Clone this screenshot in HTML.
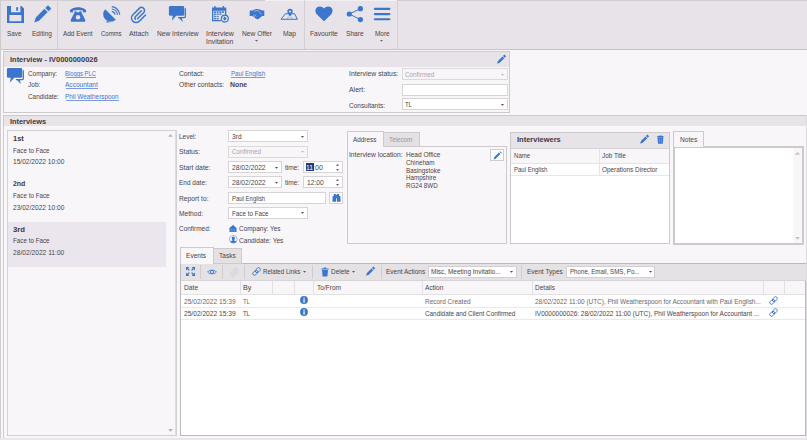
<!DOCTYPE html>
<html><head><meta charset="utf-8"><style>
html,body{margin:0;padding:0;width:807px;height:440px;overflow:hidden;background:#f9f6fa;}
.a{position:absolute;}
.t{position:absolute;white-space:nowrap;transform-origin:0 0;font-family:"Liberation Sans",sans-serif;font-size:7.3px;color:#4a4446;}
svg{overflow:visible;}
</style></head><body>
<div class="a" style="left:0px;top:0px;width:807px;height:440px;background:#f9f6fa;"></div>
<div class="a" style="left:0px;top:0px;width:807px;height:49px;background:#e7e3e8;"></div>
<div class="a" style="left:0px;top:49px;width:807px;height:1px;background:#c6c3c7;"></div>
<div class="a" style="left:265px;top:0px;width:132px;height:1px;background:#f3f0f4;"></div>
<div class="a" style="left:0px;top:0px;width:265px;height:1px;background:#d2cfd3;"></div>
<div class="a" style="left:397px;top:0px;width:410px;height:1px;background:#d2cfd3;"></div>
<div class="a" style="left:57px;top:0px;width:1px;height:49px;background:#d3d0d4;"></div>
<div class="a" style="left:304px;top:0px;width:1px;height:49px;background:#d3d0d4;"></div>
<div class="a" style="left:397px;top:0px;width:1px;height:49px;background:#d3d0d4;"></div>
<div class="a" style="left:0px;top:0px;width:1px;height:440px;background:#cfccd0;"></div>
<div class="t" style="top:29px;font-size:7.3px;line-height:10px;left:7.40px;transform:scaleX(0.8774);">Save</div>
<div class="t" style="top:29px;font-size:7.3px;line-height:10px;left:32.35px;transform:scaleX(0.8919);">Editing</div>
<div class="t" style="top:29px;font-size:7.3px;line-height:10px;left:62.60px;transform:scaleX(0.8791);">Add Event</div>
<div class="t" style="top:29px;font-size:7.3px;line-height:10px;left:100.60px;transform:scaleX(0.8194);">Comms</div>
<div class="t" style="top:29px;font-size:7.3px;line-height:10px;left:128.60px;transform:scaleX(0.9474);">Attach</div>
<div class="t" style="top:29px;font-size:7.3px;line-height:10px;left:156.60px;transform:scaleX(0.9077);">New Interview</div>
<div class="t" style="top:29px;font-size:7.3px;line-height:10px;left:205.75px;transform:scaleX(0.9554);">Interview</div>
<div class="t" style="top:29px;font-size:7.3px;line-height:10px;left:241.90px;transform:scaleX(0.9169);">New Offer</div>
<div class="t" style="top:29px;font-size:7.3px;line-height:10px;left:282.85px;transform:scaleX(0.9223);">Map</div>
<div class="t" style="top:29px;font-size:7.3px;line-height:10px;left:310.00px;transform:scaleX(0.9138);">Favourite</div>
<div class="t" style="top:29px;font-size:7.3px;line-height:10px;left:346.05px;transform:scaleX(0.9084);">Share</div>
<div class="t" style="top:29px;font-size:7.3px;line-height:10px;left:375.05px;transform:scaleX(0.8842);">More</div>
<div class="t" style="top:37px;font-size:7.3px;line-height:10px;left:206.00px;transform:scaleX(0.9378);">Invitation</div>
<svg class="a" style="left:255.0px;top:40.25px" width="3.0" height="1.65" viewBox="0 0 4 2.2" preserveAspectRatio="none"><path d="M0 0H4L2 2.2Z" fill="#6a6468"/></svg>
<svg class="a" style="left:380.3px;top:40.25px" width="3.0" height="1.65" viewBox="0 0 4 2.2" preserveAspectRatio="none"><path d="M0 0H4L2 2.2Z" fill="#6a6468"/></svg>
<svg class="a" style="left:7px;top:6px" width="17" height="17" viewBox="0 0 17 17"><path fill="#3c76cc" d="M0 0H14.5L17 2.5V17H0Z M4 0V6.3H13.4V0Z M2.4 8.9V15.2H14.4V8.9Z" fill-rule="evenodd"/><rect x="9.2" y="1.2" width="1.9" height="3.5" fill="#3c76cc"/></svg>
<svg class="a" style="left:34px;top:6px" width="17" height="17" viewBox="0 0 17 17"><path fill="#3c76cc" d="M0.3 16.4L1.8 11.4L10.4 2.8L13.7 6.1L5.1 14.7Z M11.3 1.9L14 -0.8L17.3 2.5L14.6 5.2Z"/></svg>
<svg class="a" style="left:69px;top:7px" width="19" height="16" viewBox="0 0 19 16"><path fill="#3c76cc" d="M1 5.2C0.5 4 1 2.6 2.2 1.9C6.5 -0.4 11.5 -0.4 15.8 1.9C17 2.6 17.5 4 17 5.2L14.3 5.6L13.8 3.6C10.8 2.7 7.2 2.7 4.2 3.6L3.7 5.6Z"/><path fill="#3c76cc" d="M5.6 4.3H7.6V5.3H10.4V4.3H12.4V5.3L16.2 12.8V14.7H1.8V12.8L5.6 5.3Z"/><circle cx="9" cy="10.2" r="2.2" fill="#e7e3e8"/></svg>
<svg class="a" style="left:102px;top:5px" width="19" height="18" viewBox="0 0 19 18"><path fill="#3c76cc" d="M3.2 4.2A7.5 7.5 0 0 0 13.8 14.8Z"/><path fill="#3c76cc" d="M5 15.5L4.2 17.6L8.2 17.2Z"/><path fill="none" stroke="#3c76cc" stroke-width="1.2" d="M9.8 6.4A4.2 4.2 0 0 1 13.1 9.7 M9.8 4A6.5 6.5 0 0 1 15.5 9.7 M9.8 1.7A8.8 8.8 0 0 1 17.8 9.7"/></svg>
<svg class="a" style="left:131px;top:6px" width="16" height="17" viewBox="0 0 16 17"><path fill="none" stroke="#3c76cc" stroke-width="1.5" stroke-linecap="round" d="M6.5 12.8L12.6 6.7C13.8 5.5 13.8 3.6 12.6 2.4C11.4 1.2 9.5 1.2 8.3 2.4L1.9 8.8C0.1 10.6 0.1 13.4 1.9 15.2C3.7 17 6.5 17 8.3 15.2L14.5 9"/><path fill="none" stroke="#3c76cc" stroke-width="1.5" stroke-linecap="round" d="M10.3 4.8L4.3 10.8C3.6 11.5 3.6 12.4 4.3 13.1"/></svg>
<svg class="a" style="left:168px;top:5px" width="19" height="18" viewBox="0 0 19 18"><path fill="none" stroke="#3c76cc" stroke-width="1.3" d="M17.3 3.3V11.4Q17.3 12.7 16 12.7H10"/><path fill="#3c76cc" d="M2.2 1H14.9Q16.2 1 16.2 2.3V9.4Q16.2 10.7 14.9 10.7H8.2L3.8 15.8L4.8 10.7H2.2Q0.9 10.7 0.9 9.4V2.3Q0.9 1 2.2 1Z"/><path fill="#3c76cc" d="M10.6 12.2H13.8L14.7 17.2Z"/></svg>
<svg class="a" style="left:211px;top:6px" width="19" height="17" viewBox="0 0 19 17"><path fill="#3c76cc" d="M1 1.5H15.3V9.7A4.6 4.6 0 0 0 10.2 15.2H1Z M2.3 4.7V13.9H9.9A4.6 4.6 0 0 1 14 9.9V4.7Z" fill-rule="evenodd"/><rect x="3.2" y="0" width="1.4" height="2.8" fill="#3c76cc"/><rect x="11.7" y="0" width="1.4" height="2.8" fill="#3c76cc"/><path fill="#3c76cc" opacity="0.85" d="M2.9 5.3H5.0V6.9H2.9Z M2.9 7.5H5.0V9.1H2.9Z M2.9 9.7H5.0V11.3H2.9Z M2.9 11.9H5.0V13.5H2.9Z M5.6 5.3H7.7V6.9H5.6Z M5.6 7.5H7.7V9.1H5.6Z M5.6 9.7H7.7V11.3H5.6Z M5.6 11.9H7.7V13.5H5.6Z M8.3 5.3H10.4V6.9H8.3Z M8.3 7.5H10.4V9.1H8.3Z M11.0 5.3H13.1V6.9H11.0Z"/><circle cx="13.8" cy="12.6" r="3.5" fill="none" stroke="#3c76cc" stroke-width="1.2"/><path fill="#3c76cc" d="M13.8 10.6L15.7 12.5L13.8 14.7L11.9 12.5Z"/></svg>
<svg class="a" style="left:249px;top:8px" width="16" height="12" viewBox="0 0 16 12"><path fill="#3c76cc" d="M0.7 2.4H3.1V8.1H0.7Z M12.9 2.4H15.3V8.1H12.9Z M2.8 2.9Q5.5 1 8 1.1Q11 1.2 13.2 2.6V8L9.5 10.9Q8 11.6 6.8 10.6L2.8 7.6Z"/><path fill="none" stroke="#e7e3e8" stroke-width="0.55" d="M5.2 3.6Q7.5 2.2 9 2.4L12.4 6.4 M4.2 7.3L5.9 9 M5.3 6.4L7.3 8.4"/></svg>
<svg class="a" style="left:280px;top:8px" width="18" height="13" viewBox="0 0 18 13"><path fill="none" stroke="#3c76cc" stroke-width="1" stroke-linejoin="round" d="M8 5.8H5.3L1 11.3H17.4L14.6 5.8H12"/><path fill="none" stroke="#3c76cc" stroke-width="0.5" d="M6.5 11L9 8.8 M10.8 8.8L12.5 11"/><path fill="#3c76cc" d="M10 0.8A2.7 2.7 0 0 1 12.7 3.5C12.7 5.3 10 8.6 10 8.6S7.3 5.3 7.3 3.5A2.7 2.7 0 0 1 10 0.8Z"/><circle cx="10" cy="3.5" r="1.1" fill="#e7e3e8"/></svg>
<svg class="a" style="left:315px;top:6px" width="18" height="16" viewBox="0 0 18 16"><path fill="#3c76cc" d="M9 15.3L2 8.4C-0.2 6.2 0 2.8 2.1 1.3C4.3 -0.3 7.3 0.3 9 2.6C10.7 0.3 13.7 -0.3 15.9 1.3C18 2.8 18.2 6.2 16 8.4Z"/></svg>
<svg class="a" style="left:346px;top:5px" width="18" height="18" viewBox="0 0 18 18"><path stroke="#3c76cc" stroke-width="1" d="M3.3 9L14.4 3.7 M3.3 9L14.4 14.6"/><circle cx="3.3" cy="9" r="2.6" fill="#3c76cc"/><circle cx="14.4" cy="3.7" r="2.6" fill="#3c76cc"/><circle cx="14.4" cy="14.6" r="2.6" fill="#3c76cc"/></svg>
<svg class="a" style="left:373px;top:6px" width="19" height="16" viewBox="0 0 19 16"><path stroke="#3c76cc" stroke-width="2.1" stroke-linecap="round" d="M1.9 2.9H16.4 M1.9 8.1H16.4 M1.9 13.3H16.4"/></svg>
<div class="a" style="left:3px;top:51px;width:507px;height:62px;background:#f9f6fa;border:1px solid #cdcace;box-sizing:border-box;"></div>
<div class="a" style="left:4px;top:52px;width:505px;height:15px;background:#e7e3e8;"></div>
<div class="t" style="top:55px;font-size:7.3px;line-height:10px;font-weight:700;color:#3f393c;left:9.60px;transform:scaleX(1.0234);">Interview - IV0000000026</div>
<svg class="a" style="left:496.5px;top:54.6px" width="9" height="9" viewBox="0 0 17 17"><path fill="#3c76cc" d="M0.3 16.4L1.8 11.4L10.4 2.8L13.7 6.1L5.1 14.7Z M11.3 1.9L14 -0.8L17.3 2.5L14.6 5.2Z"/></svg>
<svg class="a" style="left:6px;top:67px" width="19" height="19" viewBox="0 0 19 19"><path fill="none" stroke="#3c76cc" stroke-width="1.3" d="M17.3 3.3V11.4Q17.3 12.7 16 12.7H10"/><path fill="#3c76cc" d="M2.2 1H14.9Q16.2 1 16.2 2.3V9.4Q16.2 10.7 14.9 10.7H8.2L3.8 15.8L4.8 10.7H2.2Q0.9 10.7 0.9 9.4V2.3Q0.9 1 2.2 1Z"/><path fill="#3c76cc" d="M10.6 12.2H13.8L14.7 17.2Z"/></svg>
<div class="t" style="top:69px;font-size:7.3px;line-height:10px;left:27.60px;transform:scaleX(0.8748);">Company:</div>
<div class="t" style="top:80px;font-size:7.3px;line-height:10px;left:27.60px;transform:scaleX(0.9000);">Job:</div>
<div class="t" style="top:92px;font-size:7.3px;line-height:10px;left:27.60px;transform:scaleX(0.8754);">Candidate:</div>
<div class="t" style="top:69px;font-size:7.3px;line-height:10px;color:#4474d0;left:65.00px;transform:scaleX(0.8042);">Bloggs PLC</div>
<div class="a" style="left:66px;top:77px;width:30px;height:1px;background:#7b9bdc;"></div>
<div class="t" style="top:80px;font-size:7.3px;line-height:10px;color:#4474d0;left:65.00px;transform:scaleX(0.8982);">Accountant</div>
<div class="a" style="left:66px;top:88px;width:32px;height:1px;background:#7b9bdc;"></div>
<div class="t" style="top:92px;font-size:7.3px;line-height:10px;color:#4474d0;left:65.00px;transform:scaleX(0.8711);">Phil Weatherspoon</div>
<div class="a" style="left:66px;top:100px;width:53px;height:1px;background:#7b9bdc;"></div>
<div class="t" style="top:69px;font-size:7.3px;line-height:10px;left:179.30px;transform:scaleX(0.9232);">Contact:</div>
<div class="t" style="top:80px;font-size:7.3px;line-height:10px;left:179.30px;transform:scaleX(0.9114);">Other contacts:</div>
<div class="t" style="top:69px;font-size:7.3px;line-height:10px;color:#4474d0;left:230.60px;transform:scaleX(0.8404);">Paul English</div>
<div class="a" style="left:231px;top:77px;width:34px;height:1px;background:#7b9bdc;"></div>
<div class="t" style="top:80px;font-size:7.3px;line-height:10px;font-weight:700;left:229.60px;transform:scaleX(0.9425);">None</div>
<div class="t" style="top:69px;font-size:7.3px;line-height:10px;left:349.00px;transform:scaleX(0.9330);">Interview status:</div>
<div class="t" style="top:85px;font-size:7.3px;line-height:10px;left:349.00px;transform:scaleX(0.9453);">Alert:</div>
<div class="t" style="top:101px;font-size:7.3px;line-height:10px;left:349.00px;transform:scaleX(0.8875);">Consultants:</div>
<div class="a" style="left:402px;top:68px;width:106px;height:12px;background:#f9f6fa;border:1px solid #dcd9dd;box-sizing:border-box;"></div>
<div class="t" style="top:70px;font-size:7.3px;line-height:10px;color:#aaa5aa;left:405.30px;transform:scaleX(0.8672);">Confirmed</div>
<svg class="a" style="left:500.5px;top:73.75px" width="3.0" height="1.65" viewBox="0 0 4 2.2" preserveAspectRatio="none"><path d="M0 0H4L2 2.2Z" fill="#bcb8bc"/></svg>
<div class="a" style="left:402px;top:84px;width:106px;height:12px;background:#ffffff;border:1px solid #d7d4d8;box-sizing:border-box;"></div>
<div class="a" style="left:402px;top:98px;width:106px;height:12px;background:#ffffff;border:1px solid #d7d4d8;box-sizing:border-box;"></div>
<div class="t" style="top:100px;font-size:7.3px;line-height:10px;left:405.30px;transform:scaleX(0.8103);">TL</div>
<svg class="a" style="left:500.5px;top:103.75px" width="3.0" height="1.65" viewBox="0 0 4 2.2" preserveAspectRatio="none"><path d="M0 0H4L2 2.2Z" fill="#4b4447"/></svg>
<div class="a" style="left:3px;top:115px;width:804px;height:324px;background:#f9f6fa;border:1px solid #cdcace;box-sizing:border-box;border-right-color:#dedbdf;border-bottom-color:#e3e0e4;"></div>
<div class="a" style="left:0px;top:438px;width:807px;height:2px;background:#eae7eb;"></div>
<div class="a" style="left:4px;top:116px;width:802px;height:10px;background:#e7e3e8;"></div>
<div class="t" style="top:117px;font-size:7.3px;line-height:10px;font-weight:700;color:#3f393c;left:9.80px;transform:scaleX(1.0111);">Interviews</div>
<div class="a" style="left:7px;top:130px;width:170px;height:306px;background:#f9f6fa;border:1px solid #d3d0d4;box-sizing:border-box;"></div>
<div class="a" style="left:175px;top:131px;width:1px;height:304px;background:#e0dde1;"></div>
<div class="a" style="left:8px;top:222px;width:158px;height:45px;background:#ebe6ed;"></div>
<svg class="a" style="left:168.0px;top:134.35px" width="5.0" height="2.75" viewBox="0 0 4 2.2" preserveAspectRatio="none"><path d="M0 2.2H4L2 0Z" fill="#bab6ba"/></svg>
<svg class="a" style="left:168.1px;top:428.75px" width="5.0" height="2.75" viewBox="0 0 4 2.2" preserveAspectRatio="none"><path d="M0 0H4L2 2.2Z" fill="#bab6ba"/></svg>
<div class="t" style="top:134px;font-size:7.3px;line-height:10px;font-weight:700;color:#3f393c;left:12.90px;transform:scaleX(1.0240);">1st</div>
<div class="t" style="top:146px;font-size:7.3px;line-height:10px;left:12.90px;transform:scaleX(0.8593);">Face to Face</div>
<div class="t" style="top:157px;font-size:7.3px;line-height:10px;left:12.90px;transform:scaleX(0.9030);">15/02/2022 10:00</div>
<div class="t" style="top:179px;font-size:7.3px;line-height:10px;font-weight:700;color:#3f393c;left:12.90px;transform:scaleX(0.9473);">2nd</div>
<div class="t" style="top:191px;font-size:7.3px;line-height:10px;left:12.90px;transform:scaleX(0.8593);">Face to Face</div>
<div class="t" style="top:203px;font-size:7.3px;line-height:10px;left:12.90px;transform:scaleX(0.9030);">23/02/2022 10:00</div>
<div class="t" style="top:225px;font-size:7.3px;line-height:10px;font-weight:700;color:#3f393c;left:12.90px;transform:scaleX(1.0652);">3rd</div>
<div class="t" style="top:236px;font-size:7.3px;line-height:10px;left:12.90px;transform:scaleX(0.8593);">Face to Face</div>
<div class="t" style="top:248px;font-size:7.3px;line-height:10px;left:12.90px;transform:scaleX(0.9115);">28/02/2022 11:00</div>
<div class="t" style="top:132px;font-size:7.3px;line-height:10px;left:179.30px;transform:scaleX(0.8879);">Level:</div>
<div class="t" style="top:147px;font-size:7.3px;line-height:10px;left:179.30px;transform:scaleX(0.9287);">Status:</div>
<div class="t" style="top:163px;font-size:7.3px;line-height:10px;left:179.30px;transform:scaleX(0.9355);">Start date:</div>
<div class="t" style="top:178px;font-size:7.3px;line-height:10px;left:179.30px;transform:scaleX(0.8896);">End date:</div>
<div class="t" style="top:194px;font-size:7.3px;line-height:10px;left:179.30px;transform:scaleX(0.9205);">Report to:</div>
<div class="t" style="top:209px;font-size:7.3px;line-height:10px;left:179.30px;transform:scaleX(0.9137);">Method:</div>
<div class="t" style="top:224px;font-size:7.3px;line-height:10px;left:179.30px;transform:scaleX(0.8827);">Confirmed:</div>
<div class="a" style="left:228px;top:130px;width:80px;height:12px;background:#ffffff;border:1px solid #d7d4d8;box-sizing:border-box;"></div>
<div class="t" style="top:132px;font-size:7.3px;line-height:10px;left:231.60px;transform:scaleX(0.9102);">3rd</div>
<svg class="a" style="left:301.0px;top:135.75px" width="3.0" height="1.65" viewBox="0 0 4 2.2" preserveAspectRatio="none"><path d="M0 0H4L2 2.2Z" fill="#4b4447"/></svg>
<div class="a" style="left:228px;top:146px;width:80px;height:12px;background:#f9f6fa;border:1px solid #dcd9dd;box-sizing:border-box;"></div>
<div class="t" style="top:147px;font-size:7.3px;line-height:10px;color:#aaa5aa;left:231.60px;transform:scaleX(0.8583);">Confirmed</div>
<svg class="a" style="left:301.0px;top:151.25px" width="3.0" height="1.65" viewBox="0 0 4 2.2" preserveAspectRatio="none"><path d="M0 0H4L2 2.2Z" fill="#bcb8bc"/></svg>
<div class="a" style="left:228px;top:161px;width:54px;height:12px;background:#ffffff;border:1px solid #d7d4d8;box-sizing:border-box;"></div>
<div class="t" style="top:163px;font-size:7.3px;line-height:10px;left:231.60px;transform:scaleX(0.9198);">28/02/2022</div>
<svg class="a" style="left:275.0px;top:166.85px" width="3.0" height="1.65" viewBox="0 0 4 2.2" preserveAspectRatio="none"><path d="M0 0H4L2 2.2Z" fill="#4b4447"/></svg>
<div class="t" style="top:163px;font-size:7.3px;line-height:10px;left:284.60px;transform:scaleX(0.9043);">time:</div>
<div class="a" style="left:303px;top:161px;width:40px;height:12px;background:#ffffff;border:1px solid #d7d4d8;box-sizing:border-box;"></div>
<div class="a" style="left:306px;top:163px;width:8px;height:8px;background:#1d3b7c;"></div>
<div class="t" style="top:163px;font-size:7.3px;line-height:10px;color:#ffffff;left:306.10px;transform:scaleX(0.9369);">11</div>
<div class="t" style="top:163px;font-size:7.3px;line-height:10px;left:313.10px;transform:scaleX(0.9748);">:00</div>
<svg class="a" style="left:336.3px;top:164.05px" width="3.0" height="1.65" viewBox="0 0 4 2.2" preserveAspectRatio="none"><path d="M0 2.2H4L2 0Z" fill="#5a5458"/></svg>
<svg class="a" style="left:336.3px;top:169.05px" width="3.0" height="1.65" viewBox="0 0 4 2.2" preserveAspectRatio="none"><path d="M0 0H4L2 2.2Z" fill="#5a5458"/></svg>
<div class="a" style="left:228px;top:176px;width:54px;height:12px;background:#ffffff;border:1px solid #d7d4d8;box-sizing:border-box;"></div>
<div class="t" style="top:178px;font-size:7.3px;line-height:10px;left:231.60px;transform:scaleX(0.9198);">28/02/2022</div>
<svg class="a" style="left:275.0px;top:181.95px" width="3.0" height="1.65" viewBox="0 0 4 2.2" preserveAspectRatio="none"><path d="M0 0H4L2 2.2Z" fill="#4b4447"/></svg>
<div class="t" style="top:178px;font-size:7.3px;line-height:10px;left:284.60px;transform:scaleX(0.9043);">time:</div>
<div class="a" style="left:303px;top:176px;width:40px;height:12px;background:#ffffff;border:1px solid #d7d4d8;box-sizing:border-box;"></div>
<div class="t" style="top:178px;font-size:7.3px;line-height:10px;left:306.80px;transform:scaleX(0.9198);">12:00</div>
<svg class="a" style="left:336.3px;top:179.25px" width="3.0" height="1.65" viewBox="0 0 4 2.2" preserveAspectRatio="none"><path d="M0 2.2H4L2 0Z" fill="#5a5458"/></svg>
<svg class="a" style="left:336.3px;top:184.25px" width="3.0" height="1.65" viewBox="0 0 4 2.2" preserveAspectRatio="none"><path d="M0 0H4L2 2.2Z" fill="#5a5458"/></svg>
<div class="a" style="left:228px;top:192px;width:98px;height:12px;background:#ffffff;border:1px solid #d7d4d8;box-sizing:border-box;"></div>
<div class="t" style="top:194px;font-size:7.3px;line-height:10px;left:231.60px;transform:scaleX(0.8182);">Paul English</div>
<div class="a" style="left:329px;top:192px;width:14px;height:12px;background:#ffffff;border:1px solid #d7d4d8;box-sizing:border-box;"></div>
<svg class="a" style="left:331.6px;top:194.3px" width="9" height="8" viewBox="0 0 9 8"><path fill="#3c76cc" d="M1.8 0H3.9V2.2H1.8Z M5.1 0H7.2V2.2H5.1Z M0.6 2H4.1V7.3Q4.1 7.8 3.6 7.8H0.9Q0.4 7.8 0.4 7.3Z M4.9 2H8.4L8.6 7.3Q8.6 7.8 8.1 7.8H5.4Q4.9 7.8 4.9 7.3Z M3.8 0.8H5.2V4.2H3.8Z"/></svg>
<div class="a" style="left:228px;top:207px;width:80px;height:12px;background:#ffffff;border:1px solid #d7d4d8;box-sizing:border-box;"></div>
<div class="t" style="top:209px;font-size:7.3px;line-height:10px;left:231.60px;transform:scaleX(0.8593);">Face to Face</div>
<svg class="a" style="left:301.0px;top:212.25px" width="3.0" height="1.65" viewBox="0 0 4 2.2" preserveAspectRatio="none"><path d="M0 0H4L2 2.2Z" fill="#4b4447"/></svg>
<svg class="a" style="left:229.3px;top:224.6px" width="8" height="8" viewBox="0 0 8 8"><path fill="#3c76cc" d="M4 0.1L7.9 3.3H0.1Z M0.5 3.3H7.5V7.1H0.5Z"/><path stroke="#8db0ea" stroke-width="0.5" d="M2.4 3.8V6.8 M4 3.8V6.8 M5.6 3.8V6.8"/></svg>
<div class="t" style="top:224px;font-size:7.3px;line-height:10px;left:238.60px;transform:scaleX(0.8839);">Company: Yes</div>
<svg class="a" style="left:229.2px;top:235.4px" width="9" height="9" viewBox="0 0 9 9"><circle cx="4.3" cy="4.3" r="3.9" fill="#ffffff" stroke="#7fa3e4" stroke-width="0.8"/><path fill="#3c76cc" d="M4.3 1.4A1.6 1.8 0 0 1 5.9 3.2C5.9 4.2 5.4 4.9 4.9 5.2L7.4 6.4A3.9 3.9 0 0 1 1.2 6.4L3.7 5.2C3.2 4.9 2.7 4.2 2.7 3.2A1.6 1.8 0 0 1 4.3 1.4Z"/></svg>
<div class="t" style="top:236px;font-size:7.3px;line-height:10px;left:238.60px;transform:scaleX(0.9044);">Candidate: Yes</div>
<div class="a" style="left:347px;top:146px;width:160px;height:98px;background:#f9f6fa;border:1px solid #cdcace;box-sizing:border-box;"></div>
<div class="a" style="left:383px;top:132px;width:37px;height:15px;background:#e4e1e5;border:1px solid #cdcace;box-sizing:border-box;"></div>
<div class="a" style="left:347px;top:131px;width:37px;height:16px;background:#f9f6fa;border:1px solid #cdcace;box-sizing:border-box;border-bottom:none;"></div>
<div class="t" style="top:135px;font-size:7.3px;line-height:10px;left:353.20px;transform:scaleX(0.8737);">Address</div>
<div class="t" style="top:135px;font-size:7.3px;line-height:10px;color:#9b979b;left:389.30px;transform:scaleX(0.8575);">Telecom</div>
<div class="t" style="top:150px;font-size:6.4px;line-height:10px;left:349.00px;transform:scaleX(1.0478);">Interview location:</div>
<div class="t" style="top:150px;font-size:6.4px;line-height:10px;left:405.60px;transform:scaleX(1.0226);">Head Office</div>
<div class="t" style="top:158px;font-size:6.4px;line-height:10px;left:405.60px;transform:scaleX(0.9814);">Chineham</div>
<div class="t" style="top:166px;font-size:6.4px;line-height:10px;left:405.60px;transform:scaleX(0.9877);">Basingstoke</div>
<div class="t" style="top:173px;font-size:6.4px;line-height:10px;left:405.60px;transform:scaleX(0.9739);">Hampshire</div>
<div class="t" style="top:181px;font-size:6.4px;line-height:10px;left:405.60px;transform:scaleX(0.9672);">RG24 8WD</div>
<div class="a" style="left:490px;top:149px;width:14px;height:12px;background:#ffffff;border:1px solid #d0cdd1;box-sizing:border-box;"></div>
<svg class="a" style="left:492.5px;top:151px" width="9" height="9" viewBox="0 0 9 9"><path fill="#3c76cc" d="M0.6 8.4L1.2 6.3L5.9 1.6L7.4 3.1L2.7 7.8Z M6.6 0.9L7.3 0.2L8.8 1.7L8.1 2.4Z"/></svg>
<div class="a" style="left:510px;top:132px;width:160px;height:112px;background:#ffffff;border:1px solid #cdcace;box-sizing:border-box;"></div>
<div class="a" style="left:511px;top:133px;width:158px;height:16px;background:#e7e3e8;"></div>
<div class="t" style="top:135px;font-size:7.3px;line-height:10px;font-weight:700;color:#3f393c;left:516.60px;transform:scaleX(1.0283);">Interviewers</div>
<svg class="a" style="left:639.8px;top:135.4px" width="9" height="9" viewBox="0 0 17 17"><path fill="#3c76cc" d="M0.3 16.4L1.8 11.4L10.4 2.8L13.7 6.1L5.1 14.7Z M11.3 1.9L14 -0.8L17.3 2.5L14.6 5.2Z"/></svg>
<svg class="a" style="left:657.4px;top:135.4px" width="7" height="9" viewBox="0 0 7 9"><path fill="#3c76cc" d="M0 2.2Q0 0.5 3.4 0.5Q6.8 0.5 6.8 2.2Z M0.5 2.6H6.3L5.8 8.7H1Z"/><path stroke="#8fb0e6" stroke-width="0.5" d="M2.5 3.6V7.6 M4.3 3.6V7.6"/></svg>
<div class="a" style="left:511px;top:149px;width:158px;height:14px;background:#f9f6fa;"></div>
<div class="a" style="left:511px;top:148px;width:158px;height:1px;background:#d6d3d7;"></div>
<div class="a" style="left:511px;top:163px;width:158px;height:1px;background:#e6e3e7;"></div>
<div class="a" style="left:599px;top:149px;width:1px;height:27px;background:#e6e3e7;"></div>
<div class="t" style="top:151px;font-size:7.3px;line-height:10px;left:513.80px;transform:scaleX(0.8321);">Name</div>
<div class="t" style="top:151px;font-size:7.3px;line-height:10px;left:602.40px;transform:scaleX(0.8717);">Job Title</div>
<div class="t" style="top:165px;font-size:7.3px;line-height:10px;left:513.80px;transform:scaleX(0.8206);">Paul English</div>
<div class="t" style="top:165px;font-size:7.3px;line-height:10px;left:602.40px;transform:scaleX(0.8773);">Operations Director</div>
<div class="a" style="left:511px;top:175px;width:158px;height:1px;background:#e9e6ea;"></div>
<div class="a" style="left:673px;top:146px;width:131px;height:99px;background:#cdcace;"></div>
<div class="a" style="left:675px;top:148px;width:127px;height:95px;background:#f9f6fa;"></div>
<div class="a" style="left:675px;top:148px;width:118px;height:95px;background:#ffffff;"></div>
<div class="a" style="left:673px;top:131px;width:31px;height:16px;background:#f9f6fa;border:1px solid #cdcace;box-sizing:border-box;border-bottom:none;"></div>
<div class="t" style="top:135px;font-size:7.3px;line-height:10px;left:679.60px;transform:scaleX(0.9075);">Notes</div>
<svg class="a" style="left:795.0px;top:151.55px" width="5.0" height="2.75" viewBox="0 0 4 2.2" preserveAspectRatio="none"><path d="M0 2.2H4L2 0Z" fill="#c4c0c4"/></svg>
<svg class="a" style="left:795.0px;top:236.55px" width="5.0" height="2.75" viewBox="0 0 4 2.2" preserveAspectRatio="none"><path d="M0 0H4L2 2.2Z" fill="#c4c0c4"/></svg>
<div class="a" style="left:180px;top:263px;width:626px;height:173px;background:#ffffff;border:1px solid #bcb9bd;box-sizing:border-box;"></div>
<div class="a" style="left:213px;top:248px;width:29px;height:16px;background:#e4e1e5;border:1px solid #cdcace;box-sizing:border-box;"></div>
<div class="a" style="left:180px;top:247px;width:34px;height:17px;background:#f9f6fa;border:1px solid #cdcace;box-sizing:border-box;border-bottom:none;"></div>
<div class="t" style="top:251px;font-size:7.3px;line-height:10px;left:186.20px;transform:scaleX(0.9008);">Events</div>
<div class="t" style="top:251px;font-size:7.3px;line-height:10px;left:218.60px;transform:scaleX(0.9005);">Tasks</div>
<div class="a" style="left:181px;top:264px;width:625px;height:16px;background:#e5e2e6;"></div>
<div class="a" style="left:181px;top:280px;width:625px;height:1px;background:#d8d5d9;"></div>
<div class="a" style="left:200px;top:265px;width:1px;height:14px;background:#d0cdd1;"></div>
<div class="a" style="left:222px;top:265px;width:1px;height:14px;background:#d0cdd1;"></div>
<div class="a" style="left:244px;top:265px;width:1px;height:14px;background:#d0cdd1;"></div>
<div class="a" style="left:312px;top:265px;width:1px;height:14px;background:#d0cdd1;"></div>
<div class="a" style="left:381px;top:265px;width:1px;height:14px;background:#d0cdd1;"></div>
<div class="a" style="left:521px;top:265px;width:1px;height:14px;background:#d0cdd1;"></div>
<svg class="a" style="left:185.5px;top:267.3px" width="9" height="9" viewBox="0 0 9 9"><path stroke="#3c76cc" stroke-width="1.3" d="M1.5 1.5L3.4 3.4 M7.5 1.5L5.6 3.4 M1.5 7.5L3.4 5.6 M7.5 7.5L5.6 5.6"/><path fill="#3c76cc" d="M0 0H3.4L0 3.4Z M9 0H5.6L9 3.4Z M0 9H3.4L0 5.6Z M9 9H5.6L9 5.6Z"/></svg>
<svg class="a" style="left:207px;top:268px" width="10" height="8" viewBox="0 0 10 8"><path fill="none" stroke="#3c76cc" stroke-width="0.9" d="M0.6 4C2.3 1.6 7.7 1.6 9.4 4C7.7 6.4 2.3 6.4 0.6 4Z"/><circle cx="5" cy="4" r="1.6" fill="none" stroke="#3c76cc" stroke-width="0.9"/></svg>
<svg class="a" style="left:229.5px;top:267px" width="9" height="10" viewBox="0 0 16 17"><path fill="none" stroke="#cfcbd0" stroke-width="1.6" stroke-linecap="round" d="M6.5 12.8L12.6 6.7C13.8 5.5 13.8 3.6 12.6 2.4C11.4 1.2 9.5 1.2 8.3 2.4L1.9 8.8C0.1 10.6 0.1 13.4 1.9 15.2C3.7 17 6.5 17 8.3 15.2L14.5 9 M10.3 4.8L4.3 10.8C3.6 11.5 3.6 12.4 4.3 13.1"/></svg>
<svg class="a" style="left:252px;top:267px" width="9" height="9" viewBox="0 0 9 9"><g fill="none" stroke="#3c76cc" stroke-width="0.9"><rect x="0.5" y="4.1" width="5.6" height="3.4" rx="1.7" transform="rotate(-45 3.3 5.8)"/><rect x="3" y="1.5" width="5.6" height="3.4" rx="1.7" transform="rotate(-45 5.8 3.2)"/></g></svg>
<div class="t" style="top:267px;font-size:7.3px;line-height:10px;left:263.40px;transform:scaleX(0.8435);">Related Links</div>
<svg class="a" style="left:303.0px;top:270.85px" width="3.0" height="1.65" viewBox="0 0 4 2.2" preserveAspectRatio="none"><path d="M0 0H4L2 2.2Z" fill="#5a5458"/></svg>
<svg class="a" style="left:321px;top:267px" width="8" height="10" viewBox="0 0 8 10"><path fill="#3c76cc" d="M0.3 1.6H7.7V2.6H0.3Z M2.8 0.4H5.2V1.6H2.8Z M1 3.1H7L6.4 9.5H1.6Z"/></svg>
<div class="t" style="top:267px;font-size:7.3px;line-height:10px;left:331.30px;transform:scaleX(0.8818);">Delete</div>
<svg class="a" style="left:352.0px;top:270.85px" width="3.0" height="1.65" viewBox="0 0 4 2.2" preserveAspectRatio="none"><path d="M0 0H4L2 2.2Z" fill="#5a5458"/></svg>
<svg class="a" style="left:365.6px;top:267.2px" width="9" height="9" viewBox="0 0 17 17"><path fill="#3c76cc" d="M0.3 16.4L1.8 11.4L10.4 2.8L13.7 6.1L5.1 14.7Z M11.3 1.9L14 -0.8L17.3 2.5L14.6 5.2Z"/></svg>
<div class="t" style="top:267px;font-size:7.3px;line-height:10px;left:385.80px;transform:scaleX(0.8865);">Event Actions</div>
<div class="a" style="left:428px;top:266px;width:89px;height:12px;background:#ffffff;border:1px solid #d3d0d4;box-sizing:border-box;"></div>
<div class="t" style="top:267px;font-size:7.3px;line-height:10px;left:431.40px;transform:scaleX(0.8891);">Misc, Meeting Invitatio...</div>
<svg class="a" style="left:510.2px;top:271.05px" width="3.0" height="1.65" viewBox="0 0 4 2.2" preserveAspectRatio="none"><path d="M0 0H4L2 2.2Z" fill="#4b4447"/></svg>
<div class="t" style="top:267px;font-size:7.3px;line-height:10px;left:527.40px;transform:scaleX(0.8943);">Event Types</div>
<div class="a" style="left:566px;top:266px;width:89px;height:12px;background:#ffffff;border:1px solid #d3d0d4;box-sizing:border-box;"></div>
<div class="t" style="top:267px;font-size:7.3px;line-height:10px;left:570.30px;transform:scaleX(0.8440);">Phone, Email, SMS, Po...</div>
<svg class="a" style="left:648.8px;top:271.05px" width="3.0" height="1.65" viewBox="0 0 4 2.2" preserveAspectRatio="none"><path d="M0 0H4L2 2.2Z" fill="#4b4447"/></svg>
<div class="a" style="left:181px;top:281px;width:624px;height:14px;background:#f9f6fa;"></div>
<div class="a" style="left:181px;top:294px;width:624px;height:1px;background:#e3e0e4;"></div>
<div class="a" style="left:240px;top:281px;width:1px;height:13px;background:#e3e0e4;"></div>
<div class="a" style="left:272px;top:281px;width:1px;height:13px;background:#e3e0e4;"></div>
<div class="a" style="left:294px;top:281px;width:1px;height:13px;background:#e3e0e4;"></div>
<div class="a" style="left:313px;top:281px;width:1px;height:13px;background:#e3e0e4;"></div>
<div class="a" style="left:422px;top:281px;width:1px;height:13px;background:#e3e0e4;"></div>
<div class="a" style="left:532px;top:281px;width:1px;height:13px;background:#e3e0e4;"></div>
<div class="a" style="left:763px;top:281px;width:1px;height:13px;background:#e3e0e4;"></div>
<div class="a" style="left:784px;top:281px;width:1px;height:13px;background:#e3e0e4;"></div>
<div class="t" style="top:283px;font-size:7.3px;line-height:10px;left:183.90px;transform:scaleX(0.9208);">Date</div>
<div class="t" style="top:283px;font-size:7.3px;line-height:10px;left:243.00px;transform:scaleX(0.9864);">By</div>
<div class="t" style="top:283px;font-size:7.3px;line-height:10px;left:317.30px;transform:scaleX(0.9004);">To/From</div>
<div class="t" style="top:283px;font-size:7.3px;line-height:10px;left:424.60px;transform:scaleX(0.9023);">Action</div>
<div class="t" style="top:283px;font-size:7.3px;line-height:10px;left:534.80px;transform:scaleX(0.8919);">Details</div>
<div class="a" style="left:181px;top:307px;width:624px;height:1px;background:#ebe8ec;"></div>
<div class="a" style="left:181px;top:319px;width:624px;height:1px;background:#ebe8ec;"></div>
<div class="t" style="top:297px;font-size:7.3px;line-height:10px;color:#6c676d;left:184.35px;transform:scaleX(0.9083);">25/02/2022 15:39</div>
<div class="t" style="top:297px;font-size:7.3px;line-height:10px;color:#6c676d;left:243.30px;transform:scaleX(0.8103);">TL</div>
<svg class="a" style="left:299.6px;top:296.4px" width="8" height="8" viewBox="0 0 8 8"><circle cx="4" cy="4" r="3.9" fill="#3c76cc"/><rect x="3.4" y="3.3" width="1.3" height="3.3" fill="#fff"/><rect x="3.4" y="1.5" width="1.3" height="1.2" fill="#fff"/></svg>
<div class="t" style="top:297px;font-size:7.3px;line-height:10px;color:#6c676d;left:424.60px;transform:scaleX(0.8852);">Record Created</div>
<div class="t" style="top:297px;font-size:7.3px;line-height:10px;color:#6c676d;left:534.90px;transform:scaleX(0.8817);">28/02/2022 11:00 (UTC), Phil Weatherspoon for Accountant with Paul English...</div>
<svg class="a" style="left:769.2px;top:296.2px" width="9" height="9" viewBox="0 0 9 9"><g fill="none" stroke="#3c76cc" stroke-width="0.9"><rect x="0.5" y="4.1" width="5.6" height="3.4" rx="1.7" transform="rotate(-45 3.3 5.8)"/><rect x="3" y="1.5" width="5.6" height="3.4" rx="1.7" transform="rotate(-45 5.8 3.2)"/></g></svg>
<div class="t" style="top:309px;font-size:7.3px;line-height:10px;left:184.35px;transform:scaleX(0.9083);">25/02/2022 15:39</div>
<div class="t" style="top:309px;font-size:7.3px;line-height:10px;left:243.30px;transform:scaleX(0.8103);">TL</div>
<svg class="a" style="left:299.6px;top:308.4px" width="8" height="8" viewBox="0 0 8 8"><circle cx="4" cy="4" r="3.9" fill="#3c76cc"/><rect x="3.4" y="3.3" width="1.3" height="3.3" fill="#fff"/><rect x="3.4" y="1.5" width="1.3" height="1.2" fill="#fff"/></svg>
<div class="t" style="top:309px;font-size:7.3px;line-height:10px;left:424.60px;transform:scaleX(0.8705);">Candidate and Client Confirmed</div>
<div class="t" style="top:309px;font-size:7.3px;line-height:10px;left:534.90px;transform:scaleX(0.8899);">IV0000000026: 28/02/2022 11:00 (UTC), Phil Weatherspoon for Accountant ...</div>
<svg class="a" style="left:769.2px;top:308.2px" width="9" height="9" viewBox="0 0 9 9"><g fill="none" stroke="#3c76cc" stroke-width="0.9"><rect x="0.5" y="4.1" width="5.6" height="3.4" rx="1.7" transform="rotate(-45 3.3 5.8)"/><rect x="3" y="1.5" width="5.6" height="3.4" rx="1.7" transform="rotate(-45 5.8 3.2)"/></g></svg>
</body></html>
